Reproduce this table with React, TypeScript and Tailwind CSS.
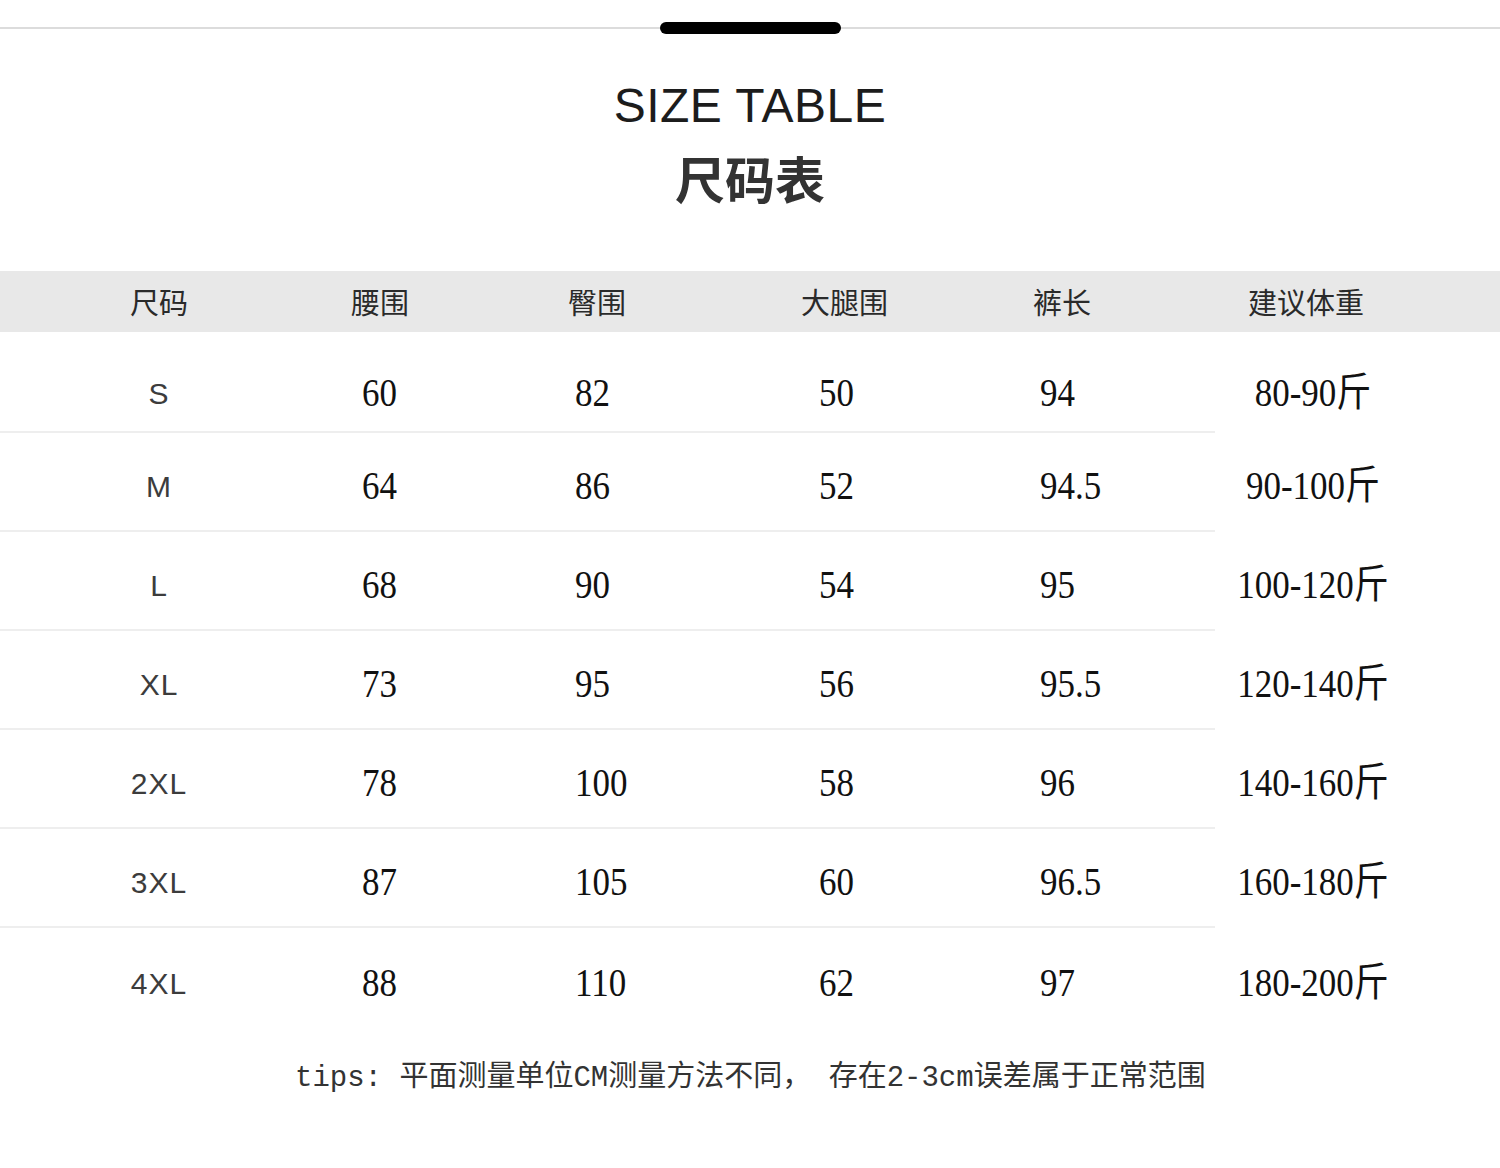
const rows = [
  ["S", "60", "82", "50", "94", "80-90斤"],
  ["M", "64", "86", "52", "94.5", "90-100斤"],
  ["L", "68", "90", "54", "95", "100-120斤"],
  ["XL", "73", "95", "56", "95.5", "120-140斤"],
  ["2XL", "78", "100", "58", "96", "140-160斤"],
  ["3XL", "87", "105", "60", "96.5", "160-180斤"],
  ["4XL", "88", "110", "62", "97", "180-200斤"],
];

const headers = ["尺码", "腰围", "臀围", "大腿围", "裤长", "建议体重"];

// column grid: 0 | 318 | 490 | 720 | 960 | 1200 | 1426
const grid = "grid grid-cols-[318px_172px_230px_240px_240px_226px]";
const headPad = ["justify-center", "pl-[33px]", "pl-[78px]", "pl-[81px]", "pl-[73px]", "pl-[48px]"];
const dataPad = ["justify-center", "pl-[44px]", "pl-[85px]", "pl-[99px]", "pl-[80px]", "justify-center"];

const serif = "font-['Liberation_Serif','Noto_Sans_CJK_SC',serif]";

export default function App() {
  return (
    <div className="w-[1500px] h-[1168px] bg-white flex flex-col overflow-hidden">
      {/* top rule with handle */}
      <div className="flex items-center pt-[22px]">
        <div className="flex-1 h-[2px] bg-[#dcdcdc]" />
        <div className="w-[181px] h-[12px] rounded-full bg-black" />
        <div className="flex-1 h-[2px] bg-[#dcdcdc]" />
      </div>

      {/* title */}
      <div className="mt-[48px] text-center text-[48px] leading-none text-[#1c1c1c] font-['Liberation_Sans',sans-serif] tracking-[0.5px]">
        SIZE TABLE
      </div>
      <div className="mt-[22px] text-center text-[50px] leading-none font-bold text-[#333] font-['Noto_Sans_CJK_SC',sans-serif]">
        尺码表
      </div>

      {/* header band */}
      <div className={`${grid} mt-[69px] h-[61px] bg-[#e8e8e8] w-full`}>
        {headers.map((h, i) => (
          <div
            key={h}
            className={`flex items-center ${headPad[i]} text-[29px] text-[#2a2a2a] font-['Noto_Sans_CJK_SC',sans-serif]`}
          >
            {h}
          </div>
        ))}
      </div>

      {/* rows */}
      {rows.map((r, ri) => (
        <div key={r[0]} className="flex flex-col">
          <div className={`${grid} ${ri === 0 ? "h-[99px] pt-[24px]" : "h-[97px] pt-[10px]"} ${ri === rows.length - 1 ? "h-[100px]" : ""}`}>
            {r.map((v, ci) => (
              <div key={ci} className={`flex items-center ${dataPad[ci]}`}>
                {ci === 0 ? (
                  <span className="text-[30px] text-[#3c3c3c] font-['Liberation_Sans',sans-serif] tracking-[1px]">
                    {v}
                  </span>
                ) : (
                  <span className={`inline-block scale-y-[1.15] text-[35px] text-[#111] ${serif}`}>{v}</span>
                )}
              </div>
            ))}
          </div>
          {ri < rows.length - 1 && <div className="w-[1215px] h-[2px] bg-[#eeeeee]" />}
        </div>
      ))}

      {/* tips */}
      <div className="mt-[36px] pl-[295px] text-[29px] leading-none text-[#333] font-['Liberation_Mono','Noto_Sans_CJK_SC',monospace]">
        tips: 平面测量单位CM测量方法不同， 存在2-3cm误差属于正常范围
      </div>
    </div>
  );
}
